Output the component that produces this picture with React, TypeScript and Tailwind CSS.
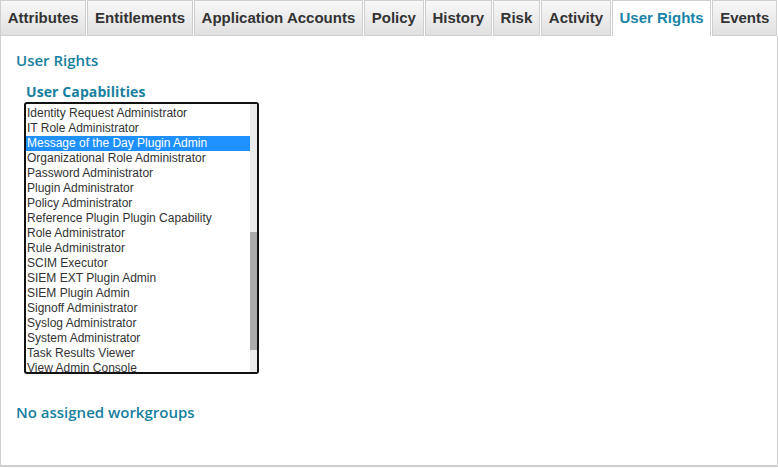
import React from 'react';

const tabs = [
  'Attributes',
  'Entitlements',
  'Application Accounts',
  'Policy',
  'History',
  'Risk',
  'Activity',
  'User Rights',
  'Events',
];

const capabilities = [
  'Identity Request Administrator',
  'IT Role Administrator',
  'Message of the Day Plugin Admin',
  'Organizational Role Administrator',
  'Password Administrator',
  'Plugin Administrator',
  'Policy Administrator',
  'Reference Plugin Plugin Capability',
  'Role Administrator',
  'Rule Administrator',
  'SCIM Executor',
  'SIEM EXT Plugin Admin',
  'SIEM Plugin Admin',
  'Signoff Administrator',
  'Syslog Administrator',
  'System Administrator',
  'Task Results Viewer',
  'View Admin Console',
];

export default function App() {
  const active = 'User Rights';
  const selected = 'Message of the Day Plugin Admin';

  return (
    <div className="w-[778px] h-[468px] bg-white flex flex-col" style={{ fontFamily: '"Liberation Sans", Arial, sans-serif' }}>
      {/* Tab strip */}
      <div className="flex gap-px h-[36px] shrink-0">
        {tabs.map((t) => (
          <div
            key={t}
            className={
              t === active
                ? 'shrink-0 whitespace-nowrap px-[6.75px] flex items-center border border-b-0 border-[#cfcfcf] bg-white text-[15px] font-bold text-[#1a84a8]'
                : 'shrink-0 whitespace-nowrap px-[6.75px] flex items-center border border-[#cfcfcf] bg-gradient-to-b from-[#f8f8f8] to-[#e0e0e0] text-[15px] font-bold text-[#333]'
            }
          >
            {t}
          </div>
        ))}
      </div>

      {/* Panel */}
      <div className="flex-1 border-l border-b-2 border-r border-[#cfcfcf] mb-[1px] flex flex-col">
        <h2 className="mt-[14px] ml-[15px] text-[15px] leading-[21px] font-semibold text-[#17809f]" style={{ fontFamily: '"Open Sans", sans-serif' }}>
          User Rights
        </h2>
        <h3 className="mt-[10px] ml-[25px] text-[14px] leading-[21px] font-bold text-[#17809f] tracking-[0.1px]" style={{ fontFamily: '"Open Sans", sans-serif' }}>
          User Capabilities
        </h3>

        {/* Listbox */}
        <div className="ml-[23px] w-[235px] h-[272px] border-2 border-[#111] rounded-[3px] flex overflow-hidden">
          <div className="flex-1 pt-[2px] overflow-hidden">
            {capabilities.map((c) => (
              <div
                key={c}
                className={
                  c === selected
                    ? 'h-[15px] leading-[15px] pl-[1px] text-[12px] bg-[#1e90ff] text-white whitespace-nowrap'
                    : 'h-[15px] leading-[15px] pl-[1px] text-[12px] text-[#333] whitespace-nowrap'
                }
              >
                {c}
              </div>
            ))}
          </div>
          {/* scrollbar */}
          <div className="w-[7px] bg-[#ebebeb] flex flex-col">
            <div className="h-[128px]" />
            <div className="h-[118px] bg-[#ababab]" />
          </div>
        </div>

        <p className="mt-[28px] ml-[15px] text-[15px] leading-[21px] font-semibold text-[#17809f]" style={{ fontFamily: '"Open Sans", sans-serif' }}>
          No assigned workgroups
        </p>
      </div>
    </div>
  );
}
